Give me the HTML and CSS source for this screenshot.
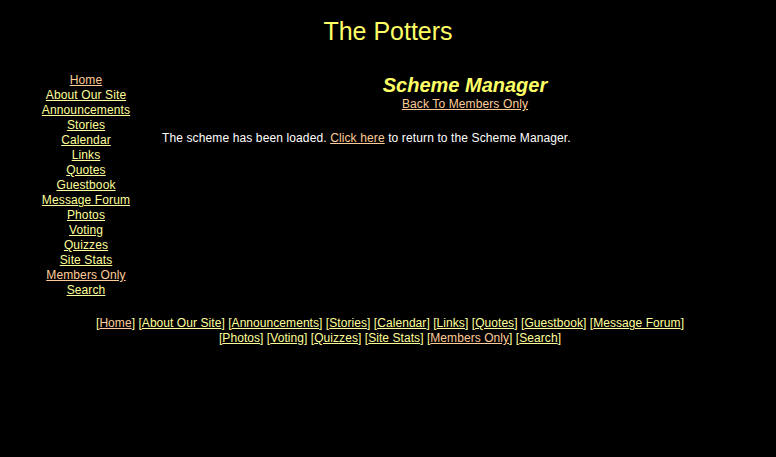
FILE: index.html
```html
<!DOCTYPE html>
<html>
<head>
<meta charset="utf-8">
<title>The Potters</title>
<link rel="stylesheet" href="styles.css">
</head>
<body>
<div class="site-title">The Potters</div>
<div class="layout">
  <nav class="sidenav">
    <a class="visited" href="#">Home</a>
    <a href="#">About Our Site</a>
    <a href="#">Announcements</a>
    <a href="#">Stories</a>
    <a href="#">Calendar</a>
    <a href="#">Links</a>
    <a href="#">Quotes</a>
    <a href="#">Guestbook</a>
    <a href="#">Message Forum</a>
    <a href="#">Photos</a>
    <a href="#">Voting</a>
    <a href="#">Quizzes</a>
    <a href="#">Site Stats</a>
    <a class="visited" href="#">Members Only</a>
    <a href="#">Search</a>
  </nav>
  <main class="content">
    <div class="page-title">Scheme Manager</div>
    <div class="back"><a class="visited" href="#">Back To Members Only</a></div>
    <p class="message">The scheme has been loaded. <a class="visited" href="#">Click here</a> to return to the Scheme Manager.</p>
  </main>
</div>
<div class="footer">
  [<a class="visited" href="#">Home</a>] [<a href="#">About Our Site</a>] [<a href="#">Announcements</a>] [<a href="#">Stories</a>] [<a href="#">Calendar</a>] [<a href="#">Links</a>] [<a href="#">Quotes</a>] [<a href="#">Guestbook</a>] [<a href="#">Message Forum</a>]<br>
  [<a href="#">Photos</a>] [<a href="#">Voting</a>] [<a href="#">Quizzes</a>] [<a href="#">Site Stats</a>] [<a class="visited" href="#">Members Only</a>] [<a href="#">Search</a>]
</div>
</body>
</html>
```

FILE: styles.css
```css
html, body {
  background: #000;
}
body {
  margin: 8px;
  color: #fff;
  font-family: "Liberation Sans", Arial, sans-serif;
  font-size: 12px;
  line-height: 15px;
  letter-spacing: 0.12px;
}
a {
  color: #ffff99;
  text-decoration: underline;
}
a.visited {
  color: #ffcc99;
}
.site-title {
  margin-top: 9px;
  text-align: center;
  color: #ffff66;
  font-size: 25px;
  line-height: 28px;
  letter-spacing: 0;
}
.layout {
  display: grid;
  grid-template-columns: 156px 1fr;
  margin-top: 28px;
}
.sidenav {
  display: flex;
  flex-direction: column;
  align-items: center;
}
.content {
  display: flex;
  flex-direction: column;
  margin-left: -2px;
}
.page-title {
  text-align: center;
  color: #ffff66;
  font-size: 20px;
  line-height: 24px;
  font-weight: bold;
  font-style: italic;
  letter-spacing: 0;
}
.back {
  text-align: center;
}
.message {
  margin: 19px 0 0 0;
}
.footer {
  margin-top: 18px;
  text-align: center;
  color: #ffff99;
  letter-spacing: 0.06px;
  padding-left: 4px;
}
```
